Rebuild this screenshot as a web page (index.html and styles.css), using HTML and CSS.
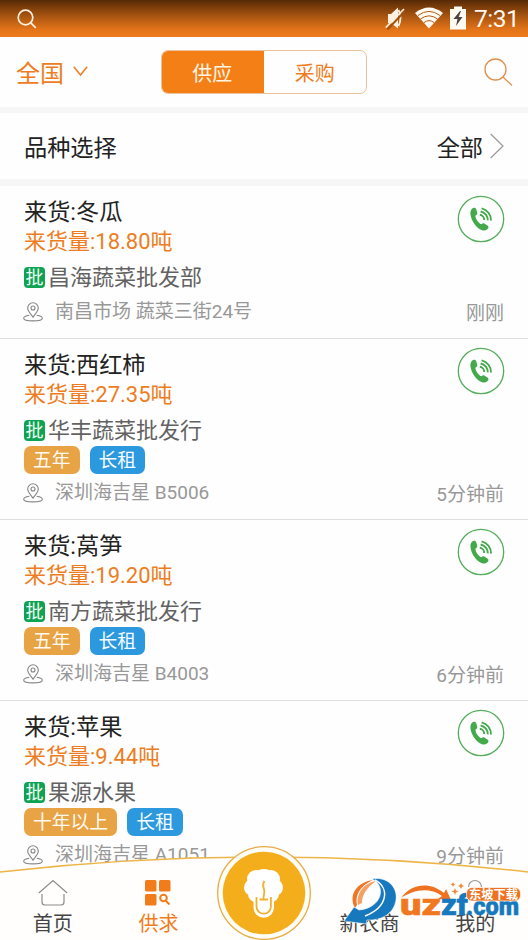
FILE: index.html
```html
<!DOCTYPE html>
<html lang="zh-CN">
<head>
<meta charset="utf-8">
<title>供求</title>
<link rel="stylesheet" href="styles.css">
</head>
<body>
<svg class="defs" width="0" height="0" aria-hidden="true">
  <symbol id="pin" viewBox="0 0 20 20">
    <g fill="none" stroke="#858585" stroke-width="1.1">
      <path d="M10 15.2C8 12.2 4.700 9.400 4.700 6.100a5.300 5.300 0 0 1 10.600 0c0 3.300-3.300 6.100-5.300 9.100z"/>
      <circle cx="10" cy="6" r="2"/>
      <path d="M6.300 13.300C2.500 13.800.7 15 .7 16.200c0 1.600 4.100 2.700 9.300 2.700s9.300-1.100 9.300-2.700c0-1.200-1.800-2.400-5.600-2.900"/>
    </g>
  </symbol>
  <symbol id="call" viewBox="0 0 48 48">
    <circle cx="24" cy="24" r="22.700" fill="none" stroke="#55ad5c" stroke-width="1.300"/>
    <path d="M15.200 13.500c1.500-1.200 3.300-.9 4 .7l1 3.200c.4 1.500-.3 2.400-1.700 3.100-.3 3 2.900 7.600 5.800 8.800 1.200-.9 2.200-1.300 3.400-.6l2.700 1.700c1.500 1 1.300 2.700-.1 3.900-2.300 2-5.300 1.600-8.200-.5-4.300-3.100-8-8.900-8.600-14.200-.3-2.600.2-4.800 1.700-6.100z" fill="#43a94b"/>
    <g fill="none" stroke="#43a94b" stroke-width="1.900">
      <path d="M22.800 19.800a5 5 0 0 1 4.400 5.200"/>
      <path d="M23.600 16.500a8.600 8.600 0 0 1 7.200 8.900"/>
      <path d="M24.600 13.400a12 12 0 0 1 9.400 12.100"/>
    </g>
  </symbol>
</svg>
<div class="screen">
  <div class="status">
    <svg class="status-search" width="20" height="20" viewBox="0 0 20 20" fill="none" stroke="#fff0df" stroke-width="1.700"><circle cx="8.500" cy="8.500" r="7.300"/><path d="M13.800 13.800l5 5"/></svg>
    <div class="status-right">
      <svg width="20" height="24" viewBox="0 0 20 24"><path d="M3 8h3l7-6.500v21L6 17H3z" fill="#fff0df"/><path d="M13.500 4q4 8 0 16" fill="none" stroke="#fff0df" stroke-width="1.800"/><path d="M2.500 23.500L20 5" stroke="#a3500e" stroke-width="2"/><path d="M.8 21.500L19 3" stroke="#fff0df" stroke-width="1.700"/></svg>
      <svg class="wifi" width="28" height="22" viewBox="0 0 28 22"><path d="M0 6Q14-5 28 6L14 21.500z" fill="#fffaf2"/><g fill="none" stroke="#b85a10" stroke-width="1"><path d="M3 8.500q11-8.200 22 0M5.500 12q8.500-6.300 17 0M9 15.500q5-3.700 10 0"/></g></svg>
      <svg class="battery" width="16" height="24" viewBox="0 0 16 24"><path d="M4 3V.5h8V3h4v20.500H0V3z" fill="#fffaf2"/><path d="M10 5L3.500 13h4L6 20l6.500-9H8.700l2.300-6z" fill="#4a4540"/></svg>
      <span class="clock">7:31</span>
    </div>
  </div>
  <header class="top">
    <div class="region"><span>全国</span><svg width="15" height="11" viewBox="0 0 15 11" fill="none" stroke="#ed7d22" stroke-width="1.500"><path d="M.8.8L7.500 9 14.200.8"/></svg></div>
    <div class="segment"><span class="seg seg-on">供应</span><span class="seg">采购</span></div>
    <svg class="search" width="29" height="29" viewBox="0 0 29 29" fill="none" stroke="#df914f" stroke-width="1.300"><circle cx="11.500" cy="11.500" r="10.500"/><path d="M19 19l9 8.500"/></svg>
  </header>
  <div class="filter">
    <span>品种选择</span>
    <span class="filter-value">全部<svg width="14" height="26" viewBox="0 0 14 26" fill="none" stroke="#999" stroke-width="1.200"><path d="M.7 1L13 13 .7 25"/></svg></span>
  </div>
  <main class="list">
    <article class="item">
      <h2>来货:冬瓜</h2>
      <p class="amount">来货量:18.80吨</p>
      <p class="shop"><b>批</b>昌海蔬菜批发部</p>
      <div class="foot"><svg width="20" height="20"><use href="#pin"/></svg><span class="addr">南昌市场 蔬菜三街24号</span><time>刚刚</time></div>
      <svg class="call" width="48" height="48"><use href="#call"/></svg>
    </article>
    <article class="item">
      <h2>来货:西红柿</h2>
      <p class="amount">来货量:27.35吨</p>
      <p class="shop"><b>批</b>华丰蔬菜批发行</p>
      <div class="tags"><span class="tag">五年</span><span class="tag tag-blue">长租</span></div>
      <div class="foot"><svg width="20" height="20"><use href="#pin"/></svg><span class="addr">深圳海吉星 B5006</span><time>5分钟前</time></div>
      <svg class="call" width="48" height="48"><use href="#call"/></svg>
    </article>
    <article class="item">
      <h2>来货:莴笋</h2>
      <p class="amount">来货量:19.20吨</p>
      <p class="shop"><b>批</b>南方蔬菜批发行</p>
      <div class="tags"><span class="tag">五年</span><span class="tag tag-blue">长租</span></div>
      <div class="foot"><svg width="20" height="20"><use href="#pin"/></svg><span class="addr">深圳海吉星 B4003</span><time>6分钟前</time></div>
      <svg class="call" width="48" height="48"><use href="#call"/></svg>
    </article>
    <article class="item">
      <h2>来货:苹果</h2>
      <p class="amount">来货量:9.44吨</p>
      <p class="shop"><b>批</b>果源水果</p>
      <div class="tags"><span class="tag">十年以上</span><span class="tag tag-blue">长租</span></div>
      <div class="foot"><svg width="20" height="20"><use href="#pin"/></svg><span class="addr">深圳海吉星 A1051</span><time>9分钟前</time></div>
      <svg class="call" width="48" height="48"><use href="#call"/></svg>
    </article>
  </main>
  <nav class="tabbar">
    <svg class="tab-bg" width="528" height="96" viewBox="0 0 528 96">
      <path d="M0 28Q264-2 528 28V96H0z" fill="#fffefd"/>
      <path d="M0 28Q264-2 528 28" fill="none" stroke="#edb548" stroke-width="1.500"/>
      <circle cx="264" cy="49" r="46.300" fill="#fffdf5" stroke="#e6ac48" stroke-width="1.300"/>
      <circle cx="264" cy="49" r="41.300" fill="#f4ae1b"/>
      <g fill="#fff"><circle cx="264" cy="38" r="13"/><circle cx="256" cy="35" r="9"/><circle cx="271" cy="35" r="9"/><circle cx="252.500" cy="43.500" r="8.500"/><circle cx="274.500" cy="43.500" r="8.500"/><circle cx="256" cy="50" r="8"/><circle cx="271" cy="50" r="8"/><path d="M253.500 46h20.500v17.500a10.250 10.250 0 0 1-20.500 0z"/></g>
      <g fill="none" stroke="#f0b030" stroke-width="1.800"><path d="M256.500 53v9.500a7.200 7.200 0 0 0 14.400 0V53M259.500 55.500h8.500M264.500 37c-3 4-1 6-.3 9s-.8 5-.8 9"/></g>
    </svg>
    <div class="tab">
      <svg width="30" height="27" viewBox="0 0 30 27" fill="none" stroke="#8c8c8c" stroke-width="1.200"><path d="M.8 14L15 1.500 29.200 14M4 15v8q0 3 3 3h16q3 0 3-3v-8"/></svg>
      <span>首页</span>
    </div>
    <div class="tab tab-on">
      <svg width="26" height="27" viewBox="0 0 26 27"><g fill="#f37c1a"><rect x="0" y="1" width="11.500" height="11.500" rx="1.500"/><rect x="14" y="1" width="11.500" height="11.500" rx="1.500"/><rect x="0" y="15" width="11.500" height="11.500" rx="1.500"/></g><g fill="none" stroke="#f37c1a" stroke-width="2"><circle cx="18.500" cy="19" r="3.300"/><path d="M21 22l3.500 3.500"/></g></svg>
      <span>供求</span>
    </div>
    <div class="tab"></div>
    <div class="tab"><svg width="26" height="27"></svg><span>新农商</span></div>
    <div class="tab"><svg width="26" height="27" viewBox="0 0 26 27" fill="none" stroke="#999" stroke-width="1.200"><path d="M6.500 8a6.500 6.500 0 0 1 13 0"/></svg><span>我的</span></div>
  </nav>
  <svg class="mark" width="184" height="52" viewBox="0 0 184 52">
    <path d="M10 31C4 17 14 4 32 3 43 8 40 24 31 31L20 38z" fill="#fff"/>
    <path d="M11 31C4 18 13 5 29 3 15 9 11 19 13 28z" fill="#ee7726"/>
    <path d="M14 28C12 16 20 6 32 4 21 12 18 19 18 26z" fill="#f6a064"/>
    <path d="M28 2C43-1 54 10 52 23 50 37 37 44 23 43L22 47 0 44 10 30 15 33C38 31 43 9 28 2z" fill="#1678bd" stroke="#fff" stroke-width=".6"/>
    <path d="M31 3C46 11 44 30 21 39" fill="none" stroke="#fff" stroke-width="1.500"/>
    <path d="M57 21C68 6 86 5 100 16l2-4 5 11-13-1 4-3C84 9 68 14 57 21z" fill="#ee7222"/>
    <text class="mark-word" x="56" y="38" textLength="41" lengthAdjust="spacingAndGlyphs" fill="#f07820" stroke="#f07820">uz</text>
    <text class="mark-word" x="97" y="38" textLength="27" lengthAdjust="spacingAndGlyphs" fill="#1678bd" stroke="#1678bd">zf</text>
    <text class="mark-com" x="122" y="38" textLength="53" lengthAdjust="spacingAndGlyphs" fill="#1678bd" stroke="#1678bd">.com</text>
    <path fill="#f08a3c" d="M111 11l1 2.500 2.500 1-2.500 1-1 2.500-1-2.500-2.500-1 2.500-1zM117 6l1 2 2 1-2 1-1 2-1-2-2-1 2-1zM109 5l.8 1.700 1.700.8-1.700.8-.8 1.700-.8-1.700-1.700-.8 1.700-.8z"/>
    <rect x="122.500" y="10.500" width="54" height="13.500" rx="5.500" fill="#ee7222" stroke="#fff" stroke-width=".7"/>
    <text class="mark-sub" x="125" y="21.800" textLength="49" lengthAdjust="spacingAndGlyphs">东坡下载</text>
  </svg>
</div>
</body>
</html>
```
FILE: styles.css
```css
* { box-sizing: border-box; }
body {
  margin: 0;
  background: #fff;
  color: #222;
  font-family: Roboto, "Noto Sans CJK SC", sans-serif;
}
h2, p { margin: 0; font-weight: 400; }
svg { display: block; flex: none; }
.defs { position: absolute; }
.screen {
  position: relative;
  width: 528px;
  height: 940px;
  overflow: hidden;
  background: #fefefe;
}
.status {
  display: flex;
  justify-content: space-between;
  height: 37px;
  padding: 0 9px 0 17px;
  background: linear-gradient(#542905 0, #733909 15%, #b35a12 50%, #e37419 80%, #ef7c1c 100%);
}
.status-search { margin-top: 9px; }
.status-right { display: flex; align-items: center; height: 36px; }
.wifi { margin-left: 10px; }
.battery { margin-left: 7px; }
.clock { width: 45px; margin: 1px 0 0 8px; color: #fff6e9; font-size: 24.5px; letter-spacing: -0.5px; white-space: nowrap; }
.top {
  display: grid;
  grid-template-columns: 145px 206px 1fr;
  align-items: center;
  height: 70px;
  padding: 0 15px 0 16px;
}
.region { display: flex; align-items: center; gap: 9px; padding-top: 3px; color: #ed7d22; font-size: 24px; line-height: 34px; }
.region svg { margin-top: -5px; }
.segment { display: flex; height: 44px; border: 1px solid #ecc29c; border-radius: 7px; overflow: hidden; }
.seg { flex: 1; color: #ed7d22; font-size: 20px; line-height: 46px; text-align: center; }
.seg-on { background: #f57f17; color: #fff6e6; margin: -1px 0 -1px -1px; line-height: 48px; }
.search { justify-self: end; }
.filter {
  display: flex;
  align-items: center;
  justify-content: space-between;
  height: 79px;
  padding: 0 24px;
  border-top: 6px solid #f6f6f6;
  border-bottom: 7px solid #f6f6f6;
  font-size: 23.2px;
}
.filter-value { display: flex; align-items: center; gap: 7px; }
.item {
  position: relative;
  height: 181px;
  padding: 11px 24px 0;
  border-bottom: 1px solid #dedede;
}
.item:first-child { height: 153px; }
.item h2 { font-size: 23.2px; line-height: 30px; }
.amount { color: #ed7d22; font-size: 22px; line-height: 30px; }
.shop { display: flex; align-items: center; gap: 3px; height: 30px; margin-top: 6px; color: #626262; font-size: 22px; line-height: 30px; }
.shop b { width: 21px; height: 21px; margin-top: -2px; border-radius: 4px; background: #0ea253; color: #effff4; font-size: 18px; font-weight: 400; line-height: 21px; text-align: center; }
.tags { display: flex; gap: 10px; height: 28px; }
.tag { height: 28px; padding: 0 9px; border-radius: 7px; background: #e8a344; color: #fffaf0; font-size: 18.8px; line-height: 30px; }
.tag-blue { background: #2c98de; color: #f4fbff; }
.foot { display: flex; align-items: center; height: 22px; margin-top: 8px; color: #989898; font-size: 19px; line-height: 22px; }
.foot svg { margin: -1px 11px 0 -1px; }
.foot svg + .addr { margin-left: 1px; }
.foot time { margin: 3px 0 0 auto; }
.call { position: absolute; top: 8px; right: 23px; }
.item:first-child .call { top: 9px; }
.tabbar {
  position: absolute;
  left: 0;
  bottom: 0;
  display: grid;
  grid-template-columns: repeat(5, 105.6px);
  width: 528px;
  height: 96px;
}
.tab-bg { position: absolute; left: 0; top: 0; }
.tab { position: relative; display: flex; flex-direction: column; align-items: center; padding-top: 35px; color: #444; font-size: 20px; line-height: 24px; }
.tab span { margin-top: 6px; }
.tab-on { color: #f37c1a; }
.mark { position: absolute; left: 344px; top: 877px; overflow: visible; }
.mark-word, .mark-com { font-family: Roboto, sans-serif; font-size: 29px; font-weight: 900; stroke-width: 0.5px; }
.mark-com { font-size: 25px; }
.mark-sub { fill: #fff; font-family: "Noto Sans CJK SC", sans-serif; font-size: 12px; font-weight: 700; }
```
